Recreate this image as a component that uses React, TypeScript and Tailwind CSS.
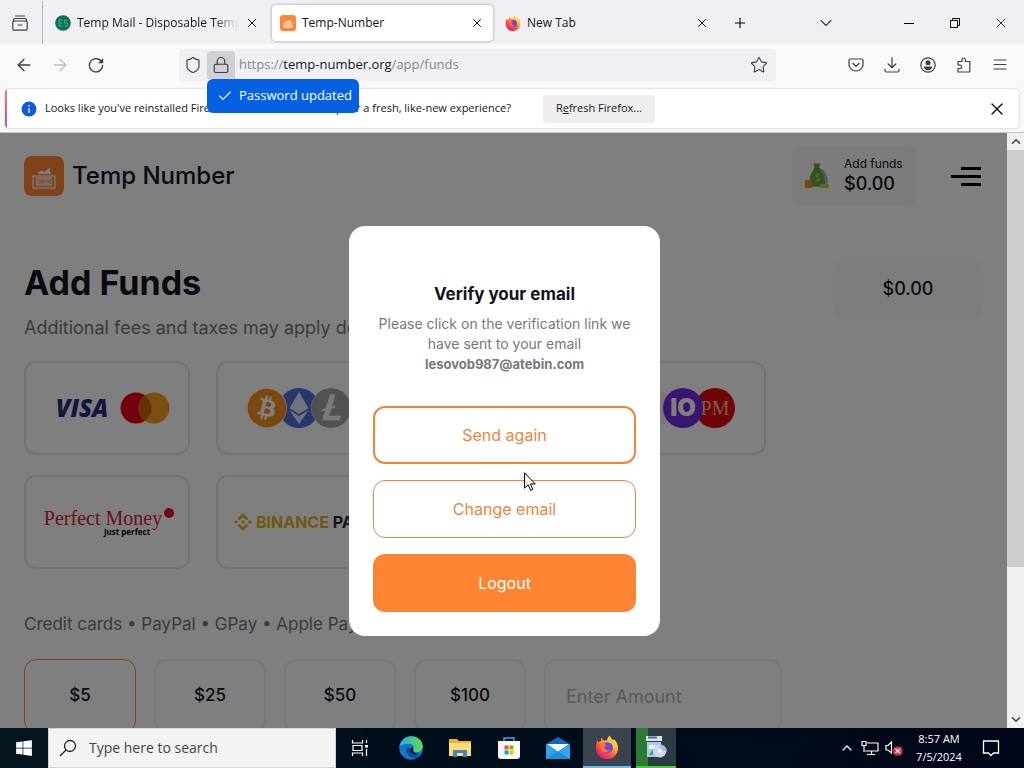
import React from 'react';
import { ArrowLeftIcon, ArrowRightIcon, CheckIcon, ChevronDownIcon, ChevronUpIcon, LockIcon, PlusIcon, ShieldIcon, StarIcon, XIcon } from 'lucide-react';
import { FaBitcoin, FaEthereum, FaWindows } from 'react-icons/fa';
import { SiBinance, SiLitecoin } from 'react-icons/si';

const FirefoxIcon = ({ className }: { className: string }) => <svg viewBox="0 0 24 24" className={className} aria-hidden="true">
    <defs>
      <linearGradient id="fox" x1="0.85" y1="0.05" x2="0.2" y2="0.95">
        <stop offset="0" stopColor="#fff04a" />
        <stop offset="0.35" stopColor="#ffb02e" />
        <stop offset="0.65" stopColor="#ff5338" />
        <stop offset="1" stopColor="#e31587" />
      </linearGradient>
    </defs>
    <path d="M2.5 5.2 3.6 7.4C4.3 6.6 5 6.2 6 6L6.2 2.8 9 5.8C10.2 5.2 11 5.3 12 5.5 12.2 3.6 13.4 1.8 15 .6 15 3 17 4.2 18.5 5.6L18.6 4C21.5 6.4 23.2 9.8 23 13.2A11 11 0 0 1 1 13.2C.9 10.2 1.5 7.4 2.5 5.2Z" fill="url(#fox)" />
    <circle cx="12.6" cy="12.6" r="5.4" fill="#7543e3" />
    <path d="M5 9.2C8 7.6 10 8.6 11.6 10.4L9.4 12C9.2 15 12 15.8 15 14.6 13 18.5 7.2 18 5.6 14.4Z" fill="#ff7a2a" />
    <path d="M13.5 6.5C17 7.6 18.4 10 18 13.2L21 12C20.5 8.6 18 6.8 15.5 5Z" fill="#ffc93c" />
  </svg>;

const BrandIcon = ({ className }: { className: string }) => <svg viewBox="0 0 40 40" className={className} aria-hidden="true">
    <rect width="40" height="40" rx="8" fill="#ff8432" />
    <path d="M14 18c0-2 2-3.500 4-3.500L20 16l6.500-4.500-.8 3.500 1.300 3Z" fill="#fff" />
    <rect x="9" y="20" width="22" height="12" fill="none" stroke="#fff" strokeWidth="1.2" />
    <rect x="11.5" y="21" width="17" height="9" fill="#ffd9bd" />
    <path d="M14 24h3v3h-3M19 27.500v-4l2 2 2-2v4M28 24h-3v3h3" fill="none" stroke="#ffa15f" />
  </svg>;

const MoneyBag = () => <svg viewBox="0 0 26 28" className="h-7 w-[26px]" aria-hidden="true">
    <path d="M16 6c5 2 8 8 7.500 15L15 25Z" fill="#93b6d9" />
    <path d="M9.500 1.500h7l-1.800 5c4.500 3.500 6.800 9 6.100 18H6c-1.600-9 1-14 5-18Z" fill="#64a637" />
    <path d="M10 6.500h6" stroke="#9b6b30" strokeWidth="2" />
    <path d="M16 12.500c-4-2-5 1.500-2.300 2.700 3.300 1.300 2 4.500-2.200 2.800M13.400 11v9" fill="none" stroke="#a3cf4c" strokeWidth="1.200" />
    <path d="M1 18h7v8H1z" fill="#ee8b20" />
    <path d="M16 22h9v4h-9z" fill="#b5cf4c" />
  </svg>;

const tabs = [{
  title: 'Temp Mail - Disposable Temporary Email',
  icon: 'mail',
  active: false
}, {
  title: 'Temp-Number',
  icon: 'number',
  active: true
}, {
  title: 'New Tab',
  icon: 'firefox',
  active: false
}];

const TabIcon = ({ icon }: { icon: string }) => {
  if (icon === 'firefox') return <FirefoxIcon className="h-4 w-4 shrink-0" />;
  if (icon === 'number') return <BrandIcon className="h-4 w-4 shrink-0" />;
  return <svg viewBox="0 0 16 16" className="h-4 w-4 shrink-0" aria-hidden="true">
      <circle cx="8" cy="8" r="7.800" fill="#126e5b" />
      <path d="M7.500 5H4v6h3.500M4 8h3M12.500 5h-3v3h3v3h-3" fill="none" stroke="#2fb795" strokeWidth="1" />
    </svg>;
};

const TabStrip = () => <div className="flex h-11 shrink-0 items-center bg-[#f0f0f4] pt-0.5">
    <button aria-label="Recent browsing" className="flex h-11 w-[43px] shrink-0 items-center justify-center border-r border-[#b5b5ba] pr-0.5">
      <svg viewBox="0 0 16 16" className="h-4 w-4" fill="none" stroke="#3c3c48" strokeWidth="1.200" aria-hidden="true">
        <path d="M3.500 1h9M6 10h4" strokeLinecap="round" />
        <path d="M1.500 6.500V5A1.500 1.500 0 0 1 3 3.500h10A1.500 1.500 0 0 1 14.500 5v1.500" />
        <rect x=".8" y="6" width="14.400" height="9.200" rx="1.500" />
      </svg>
    </button>
    <div className="ml-1 flex gap-1">
      {tabs.map(tab => <div key={tab.title} className={`flex h-9 w-[221px] items-center gap-1.5 rounded px-2 ${tab.active ? 'bg-white shadow-[0_0_3px_rgba(0,0,0,0.4)]' : ''}`}>
          <TabIcon icon={tab.icon} />
          <span className={`min-w-0 flex-1 overflow-hidden whitespace-nowrap text-xs text-[#15141a] ${tab.icon === 'mail' ? '[mask-image:linear-gradient(to_right,black_85%,transparent)]' : ''}`}>{tab.title}</span>
          <button aria-label="Close tab" className="flex h-4 w-4 shrink-0 items-center justify-center"><XIcon className="h-3.5 w-3.5" strokeWidth={1.6} /></button>
        </div>)}
    </div>
    <button aria-label="New tab" className="ml-3 flex h-5 w-5 items-center justify-center"><PlusIcon className="h-4 w-4" strokeWidth={1.6} /></button>
    <div className="ml-auto flex items-center">
      <button aria-label="List all tabs" className="mr-10 flex w-10 justify-center text-[#3f3e48]"><ChevronDownIcon className="h-5 w-5" strokeWidth={1.4} /></button>
      <button aria-label="Minimize" className="flex h-11 w-[46px] items-center justify-center"><span className="h-px w-2.5 bg-black" /></button>
      <button aria-label="Restore" className="flex h-11 w-[46px] items-center justify-center">
        <svg viewBox="0 0 10 10" className="h-2.5 w-2.5" fill="none" stroke="#000" aria-hidden="true"><path d="M.5 2.500h7v7h-7zM2.500 2.500v-2h7v7h-2" /></svg>
      </button>
      <button aria-label="Close window" className="flex h-11 w-[46px] items-center justify-center"><XIcon className="h-4 w-4" strokeWidth={1.2} /></button>
    </div>
  </div>;

const NavBar = () => <div className="flex h-[42px] shrink-0 items-center bg-[#f9f9fb] text-[#3f3e48]">
    <button aria-label="Back" className="ml-3.5 flex w-5 justify-center"><ArrowLeftIcon className="h-5 w-5" strokeWidth={1.6} /></button>
    <button aria-label="Forward" disabled className="ml-4 flex w-5 justify-center text-[#bdbdc2]"><ArrowRightIcon className="h-5 w-5" strokeWidth={1.6} /></button>
    <button aria-label="Reload" className="ml-4 flex w-5 justify-center">
      <svg viewBox="0 0 16 16" className="h-4 w-4" aria-hidden="true">
        <path d="M14 5.500A6.600 6.600 0 1 0 14.600 8.500" fill="none" stroke="currentColor" strokeWidth="1.300" strokeLinecap="round" />
        <path d="M15.200 1v5.300H10z" fill="currentColor" />
      </svg>
    </button>
    <div className="ml-[73px] mr-[72px] flex h-8 min-w-0 flex-1 items-center rounded bg-[#f0f0f4]">
      <button aria-label="Tracking protection" className="flex w-7 justify-center"><ShieldIcon className="h-[18px] w-[18px]" strokeWidth={1.6} /></button>
      <div className="relative">
        <button aria-label="Site information" className="flex h-7 w-7 items-center justify-center rounded-t bg-[#cfcfd5]"><LockIcon className="h-[18px] w-[18px]" strokeWidth={1.6} /></button>
        <div role="status" className="absolute left-0 top-full z-20 flex h-[34px] w-[152px] items-center gap-1.5 whitespace-nowrap rounded-md bg-[#0561e2] pl-2.5 text-[13px] text-white">
          <CheckIcon className="h-4 w-4" strokeWidth={1.6} />
          Password updated
        </div>
      </div>
      <div className="ml-1 flex-1 truncate text-[13px] text-[#85848f]">https://<span className="text-[#15141a]">temp-number.org</span>/app/funds</div>
      <button aria-label="Bookmark" className="mr-2 flex"><StarIcon className="h-[18px] w-[18px]" strokeWidth={1.5} /></button>
    </div>
    <div className="mr-4 flex items-center gap-5">
      <button aria-label="Save to Pocket">
        <svg viewBox="0 0 16 16" className="h-4 w-4" fill="none" stroke="currentColor" strokeWidth="1.200" strokeLinecap="round" strokeLinejoin="round" aria-hidden="true">
          <path d="M2.500 2h11a1.500 1.500 0 0 1 1.500 1.500v4a7 6.500 0 0 1-14 0v-4A1.500 1.500 0 0 1 2.500 2ZM4.800 6.300 8 9.300l3.200-3" />
        </svg>
      </button>
      <button aria-label="Downloads">
        <svg viewBox="0 0 16 16" className="h-4 w-4" fill="none" stroke="currentColor" strokeWidth="1.200" strokeLinecap="round" strokeLinejoin="round" aria-hidden="true">
          <path d="M8 .8v9.700M4.200 7 8 10.700 11.800 7M1 12v1.500A1.500 1.500 0 0 0 2.500 15h11a1.500 1.500 0 0 0 1.500-1.500V12" />
        </svg>
      </button>
      <button aria-label="Account">
        <svg viewBox="0 0 16 16" className="h-4 w-4" aria-hidden="true">
          <circle cx="8" cy="8" r="7.200" fill="none" stroke="currentColor" strokeWidth="1.200" />
          <circle cx="8" cy="5.800" r="2.500" fill="currentColor" />
          <path d="M3.600 9.500h8.800c-.4 2.400-2.300 3.700-4.400 3.700S4 11.900 3.600 9.500Z" fill="currentColor" />
        </svg>
      </button>
      <button aria-label="Extensions">
        <svg viewBox="0 0 16 16" className="h-4 w-4" fill="none" stroke="currentColor" strokeWidth="1.200" strokeLinejoin="round" aria-hidden="true">
          <path d="M2 4.500h4V2.700a1.700 1.700 0 0 1 3.400 0v1.800h4.400V15H2v-3.500h1.900a1.700 1.700 0 0 0 0-3.400H2Z" />
        </svg>
      </button>
      <button aria-label="Menu">
        <svg viewBox="0 0 16 16" className="h-4 w-4" fill="none" stroke="currentColor" strokeWidth="1.200" strokeLinecap="round" aria-hidden="true"><path d="M2 3h12M2 7.500h12M2 12h12" /></svg>
      </button>
    </div>
  </div>;

const InfoBar = () => <div className="shrink-0 border-b border-[#c4c4c8] bg-[#f9f9fb] px-[5px] pb-1 pt-[3px]">
    <div className="flex h-[39px] items-center overflow-hidden rounded bg-white shadow-[0_0_2px_rgba(0,0,0,0.3)]">
      <span className="h-full w-0.5 bg-linear-to-b from-[#e8845c] to-[#a951c9]" />
      <svg viewBox="0 0 16 16" className="ml-3.5 h-4 w-4" aria-hidden="true">
        <circle cx="8" cy="8" r="7.500" fill="#0a5cd8" />
        <path d="M8 7v5M8 4v1.500" stroke="#fff" strokeWidth="1.300" />
      </svg>
      <p className="ml-2 whitespace-nowrap text-[11px] text-[#15141a]">Looks like you've reinstalled Firefox. Want us to clean it up for a fresh, like-new experience?</p>
      <button className="ml-8 h-7 w-28 rounded bg-[#eeeef1] text-[11px] font-medium text-[#15141a]">R<span className="underline">e</span>fresh Firefox...</button>
      <button aria-label="Dismiss" className="ml-auto mr-3"><XIcon className="h-5 w-5" strokeWidth={1.5} /></button>
    </div>
  </div>;

const Coin = ({ children, className }: { children: React.ReactNode; className: string }) => <span className={`flex h-10 w-10 shrink-0 items-center justify-center overflow-hidden rounded-full ${className}`}>{children}</span>;

const VisaMastercard = () => <span className="flex items-center gap-3 pl-3">
    <span className="font-['Open_Sans'] text-[24px] font-extrabold italic leading-6 text-[#20307e]">VISA</span>
    <svg viewBox="0 0 50 32" className="h-8 w-[50px]" aria-hidden="true">
      <circle cx="16" cy="16" r="15.500" fill="#eb001b" />
      <circle cx="34" cy="16" r="15.500" fill="#f79e1b" />
      <path d="M25 3.400a15.500 15.500 0 0 1 0 25.200 15.500 15.500 0 0 1 0-25.200Z" fill="#d0600c" />
    </svg>
  </span>;

const CryptoCoins = () => <span className="flex -space-x-2">
    <Coin className="z-10 bg-white text-[#f7931a]"><FaBitcoin className="h-10 w-10" /></Coin>
    <Coin className="bg-[#4a70e0] text-[#dfe6ff]"><FaEthereum className="h-8 w-8" /></Coin>
    <Coin className="bg-[#f4f4f4] text-[#a5a5a5]"><SiLitecoin className="h-10 w-10" /></Coin>
  </span>;

const WalletCoins = () => <span className="flex -space-x-2">
    <Coin className="bg-[#f0efe8] text-[#26a17b]"><span className="text-xl">₮</span></Coin>
    <Coin className="z-10 bg-[#6f2be0] text-white"><span className="text-2xl font-black">IO</span></Coin>
    <Coin className="bg-[#e00707] text-[#ffb5a8]"><span className="font-['Liberation_Serif'] text-xl">PM</span></Coin>
  </span>;

const PerfectMoney = () => <span className="flex items-start gap-0.5 pl-1">
    <span className="flex flex-col items-end">
      <span className="whitespace-nowrap font-['Liberation_Serif'] text-xl leading-5 text-[#d8232a]">Perfect Money</span>
      <span className="mr-3 font-['Open_Sans'] text-[8px] font-bold leading-2 text-black">Just perfect</span>
    </span>
    <span className="h-2.5 w-2.5 rounded-full bg-[#e3122a]" />
  </span>;

const BinancePay = () => <span className="flex items-center gap-1 whitespace-nowrap text-base font-bold text-[#e0b020]">
    <SiBinance className="h-[18px] w-[18px]" />
    <span>BINANCE <span className="text-[#28282d]">PAY</span></span>
  </span>;

const methods = [
  { name: 'Cards', logo: <VisaMastercard /> },
  { name: 'Crypto', logo: <CryptoCoins /> },
  { name: 'Other', logo: null },
  { name: 'Wallets', logo: <WalletCoins /> },
  { name: 'Perfect Money', logo: <PerfectMoney /> },
  { name: 'Binance Pay', logo: <BinancePay /> },
];

const amounts = ['$5', '$25', '$50', '$100'];

const FundsPage = () => <main className="flex flex-col px-6 pt-3.5 text-[#12121f]">
    <header className="flex items-center">
      <BrandIcon className="h-10 w-10" />
      <span className="ml-2 text-2xl font-medium leading-8">Temp Number</span>
      <a href="#funds" className="ml-auto flex h-[58px] w-[124px] items-center gap-3.5 rounded-lg bg-[#f8f8fa] pl-3">
        <MoneyBag />
        <span className="flex flex-col">
          <span className="text-xs leading-4">Add funds</span>
          <span className="text-lg font-medium leading-6">$0.00</span>
        </span>
      </a>
      <button aria-label="Open menu" className="ml-[35px] mr-0.5 flex w-[30px] flex-col items-end gap-[5px]">
        <span className="h-[3px] w-5 bg-black" />
        <span className="h-[3px] w-[30px] bg-black" />
        <span className="h-[3px] w-5 bg-black" />
      </button>
    </header>
    <div className="mt-[55px] flex h-[58px] items-start">
      <h1 className="text-[34px] font-bold leading-[46px]">Add Funds</h1>
      <span className="ml-auto flex h-[58px] w-[150px] items-center justify-center rounded-lg bg-[#fbfbfc] text-lg font-medium">$0.00</span>
    </div>
    <p className="-mt-1 text-lg leading-7 text-[#77777f]">Additional fees and taxes may apply depending on the method</p>
    <div className="mt-[19px] grid w-[742px] grid-cols-4 gap-x-[26px] gap-y-5">
      {methods.map(method => <button key={method.name} aria-label={method.name} className="flex h-[94px] items-center justify-center rounded-xl border-2 border-[#e8e8ec]">
          {method.logo}
        </button>)}
    </div>
    <p className="mt-[41px] text-[17px] leading-7 text-[#77777f]">Credit cards • PayPal • GPay • Apple Pay</p>
    <div className="mt-[21px] flex gap-[18px]">
      {amounts.map((amount, index) => <button key={amount} className={`h-[74px] w-28 rounded-xl text-[17px] font-medium ${index === 0 ? 'border border-[#ff8432]' : 'border-2 border-[#f2f2f4]'}`}>{amount}</button>)}
      <input aria-label="Enter Amount" placeholder="Enter Amount" className="h-[74px] w-[238px] rounded-xl border-2 border-[#f2f2f4] px-5 text-lg placeholder:text-[#b5b5bc]" />
    </div>
  </main>;

const VerifyDialog = () => <div role="dialog" aria-labelledby="verify-title" className="w-[311px] rounded-2xl bg-white px-6 pb-6 pt-14 text-center">
    <h2 id="verify-title" className="text-[17px] font-bold leading-6 text-[#12121a]">Verify your email</h2>
    <p className="mt-2 text-sm leading-5 text-[#77777f]">Please click on the verification link we have sent to your email <strong className="block text-[13px] font-bold leading-5">lesovob987@atebin.com</strong></p>
    <div className="mt-8 flex flex-col gap-4 text-base">
      <button className="h-[58px] rounded-xl border-2 border-[#f0853a] text-[#ee8540]">Send again</button>
      <button className="h-[58px] rounded-xl border border-[#f0853a] text-[#ee8540]">Change email</button>
      <button className="h-[58px] rounded-xl bg-[#fc8432] text-white">Logout</button>
    </div>
  </div>;

const ScrollBar = () => <div className="flex w-[17px] shrink-0 flex-col items-center bg-[#f0f0f0] text-[#505050]">
    <ChevronUpIcon className="h-[17px] w-3.5 shrink-0" strokeWidth={3} />
    <div className="h-[417px] w-full bg-[#cdcdcd]" />
    <ChevronDownIcon className="mt-auto h-[17px] w-3.5 shrink-0" strokeWidth={3} />
  </div>;

const Taskbar = () => <footer className="flex h-10 shrink-0 items-center bg-linear-to-r from-[#03151f] to-[#000617] text-white">
    <button aria-label="Start" className="flex h-10 w-12 items-center justify-center"><FaWindows className="h-[18px] w-[18px]" /></button>
    <label className="flex h-10 w-72 items-center gap-3 border border-[#d5d5d5] bg-[#f3f3f3] pl-2.5 text-[#333]">
      <svg viewBox="0 0 18 18" className="h-[18px] w-[18px] shrink-0" fill="none" stroke="#222" strokeWidth="1.300" aria-hidden="true">
        <circle cx="11" cy="7" r="5.500" />
        <path d="M7 11 1 17" />
      </svg>
      <input aria-label="Search" placeholder="Type here to search" className="min-w-0 flex-1 text-sm outline-none placeholder:text-[#444]" />
    </label>
    <button aria-label="Task view" className="flex h-10 w-12 items-center justify-center">
      <svg viewBox="0 0 18 18" className="h-[18px] w-[18px]" fill="none" stroke="#fff" strokeWidth="1.200" aria-hidden="true">
        <path d="M1.500 1v3h10V1M2 6.500h9v5H2zM1.500 17v-3h10v3M15.500 1v3M15.500 10v7" />
        <path d="M14 6h3v2.500h-3z" fill="#fff" stroke="none" />
      </svg>
    </button>
    <button aria-label="Edge" className="flex h-10 w-[54px] items-center justify-center">
      <svg viewBox="0 0 24 24" className="h-6 w-6" aria-hidden="true">
        <defs>
          <linearGradient id="edge-top" x1="0" y1="0.4" x2="1" y2="0.5">
            <stop offset="0" stopColor="#2aa9e6" />
            <stop offset="1" stopColor="#66d94a" />
          </linearGradient>
        </defs>
        <circle cx="12" cy="12" r="11.800" fill="#1476d0" />
        <path d="M.5 10.500C2 3.500 7 .2 12.500.2 19 .2 23.800 5 23.800 10.500c0 3.500-2.800 5.500-6 5.500-2.500 0-4-1-3.600-2 1.800-3-.2-6.200-4-6.200C5.500 7.800 2 9 .5 10.500Z" fill="url(#edge-top)" />
        <path d="M8.500 10.500C5.500 14.500 8.500 22 16 22c3 0 5-1.200 6-3-5 2.500-11.500-.5-10.500-6.500Z" fill="#0b4b96" />
        <path d="M11.400 13c-.7 3.600 3 6.400 7.500 5.800l3.100-.8c-2 .5-5-.1-6.500-1.500C13.500 16 14.500 14 14 12c-.4-1.500-2.200-.8-2.600 1Z" fill="#03151f" />
      </svg>
    </button>
    <button aria-label="File Explorer" className="flex h-10 w-11 items-center justify-center">
      <svg viewBox="0 0 22 20" className="h-5 w-[22px]" aria-hidden="true">
        <path d="M0 1h8l2 2h12v15H0z" fill="#e9b43a" />
        <path d="M0 5h22v13H0z" fill="#ffdf70" />
        <path d="M4 19v-7h14v7h-4v-4H8v4Z" fill="#3b87cf" />
      </svg>
    </button>
    <button aria-label="Microsoft Store" className="flex h-10 w-[54px] items-center justify-center">
      <svg viewBox="0 0 24 24" className="h-6 w-6" aria-hidden="true">
        <path d="M7 6V2h10v4" fill="none" stroke="#36a8e8" strokeWidth="1.500" />
        <path d="M1 5h22v15a3 3 0 0 1-3 3H4a3 3 0 0 1-3-3z" fill="#f7f7f7" />
        <path d="M7.500 9.500h4v4h-4z" fill="#f25022" />
        <path d="M12.500 9.500h4v4h-4z" fill="#7fba00" />
        <path d="M7.500 14.500h4v4h-4z" fill="#00a4ef" />
        <path d="M12.500 14.500h4v4h-4z" fill="#ffb900" />
      </svg>
    </button>
    <button aria-label="Mail" className="flex h-10 w-11 items-center justify-center">
      <svg viewBox="0 0 24 22" className="h-[22px] w-6" aria-hidden="true">
        <path d="M0 7 12 0l12 7v5H0z" fill="#1565b8" />
        <path d="M1 7h22l-11 8z" fill="#f4f6f8" />
        <path d="M0 7l12 8L24 7v15H0z" fill="#2ba7ea" />
        <path d="M0 22 12 14.500 24 22z" fill="#1790dc" />
      </svg>
    </button>
    <button aria-label="Firefox" className="ml-[3px] flex h-10 w-12 items-center justify-center border-b-2 border-[#76b9ed] bg-[#3b444e]"><FirefoxIcon className="h-6 w-6" /></button>
    <button aria-label="Installer" className="ml-[5px] flex h-10 w-10 items-center justify-center border-b-2 border-[#3fcf2e] bg-linear-to-r from-[#2c7a35] from-30% to-[#2b3c42] to-30%">
      <svg viewBox="0 0 22 24" className="h-6 w-[22px]" aria-hidden="true">
        <path d="M1 1h16v5H1z" fill="#dfe6ee" />
        <path d="M3 2.500h9" stroke="#3d68a8" strokeWidth="2" />
        <path d="M2 7h14v15H2z" fill="#a9cbea" />
        <path d="M4 10h6v4H4z" fill="#e8f1f8" />
        <path d="M4 20 8 14v6z" fill="#4da565" />
        <circle cx="15" cy="16" r="6.500" fill="#cdd8ee" />
        <path d="M15 9.500a6.500 6.500 0 0 1 6.500 6.500H15Z" fill="#aebbe6" />
        <circle cx="15" cy="16" r="2" fill="#fff" />
      </svg>
    </button>
    <div className="ml-auto flex items-center">
      <button aria-label="Show hidden icons"><ChevronUpIcon className="h-4 w-4" strokeWidth={1.8} /></button>
      <svg viewBox="0 0 18 16" className="ml-1.5 h-4 w-[18px]" fill="none" stroke="#fff" strokeWidth="1.200" aria-hidden="true">
        <path d="M6 3h11v8H4M10.500 11v3M6 14.500h8M1 1.500h4v4H1zM3 5.500V12" />
      </svg>
      <svg viewBox="0 0 18 16" className="ml-1.5 h-4 w-[18px]" fill="none" stroke="#fff" strokeWidth="1.200" aria-hidden="true">
        <path d="M1 5.500h2L6.500 2v11L3 10H1z" />
        <rect x="8" y="6.500" width="9.500" height="9" rx="4" fill="#d9303e" stroke="none" />
        <path d="m10.500 9 4.500 4M15 9l-4.500 4" />
      </svg>
      <time className="ml-3 w-12 whitespace-nowrap text-center text-[11px] leading-[18px]">8:57 AM<br />7/5/2024</time>
      <button aria-label="Notifications" className="ml-[19px] mr-6">
        <svg viewBox="0 0 18 18" className="h-[18px] w-[18px]" fill="none" stroke="#fff" strokeWidth="1.300" aria-hidden="true"><path d="M1.500 2h15v12h-5L9 16.500 6.500 14h-5z" /></svg>
      </button>
    </div>
  </footer>;

export default function App() {
  return <div className="relative flex h-screen flex-col overflow-hidden bg-white font-['Open_Sans',sans-serif]">
      <TabStrip />
      <NavBar />
      <InfoBar />
      <div className="flex min-h-0 flex-1">
        <div className="relative min-w-0 flex-1 overflow-hidden font-['Inter',sans-serif]">
          <FundsPage />
          <div className="absolute inset-0 z-10 flex items-center justify-center bg-black/50 pl-0.5">
            <VerifyDialog />
          </div>
        </div>
        <ScrollBar />
      </div>
      <Taskbar />
      <svg viewBox="0 0 12 20" className="absolute left-[524px] top-[472px] z-30 h-5 w-3" aria-hidden="true">
        <path d="M.6.8v15.400l3.600-3.400 2.400 5.600 2.200-1-2.400-5.400h4.900z" fill="#fff" stroke="#000" />
      </svg>
    </div>;
}
